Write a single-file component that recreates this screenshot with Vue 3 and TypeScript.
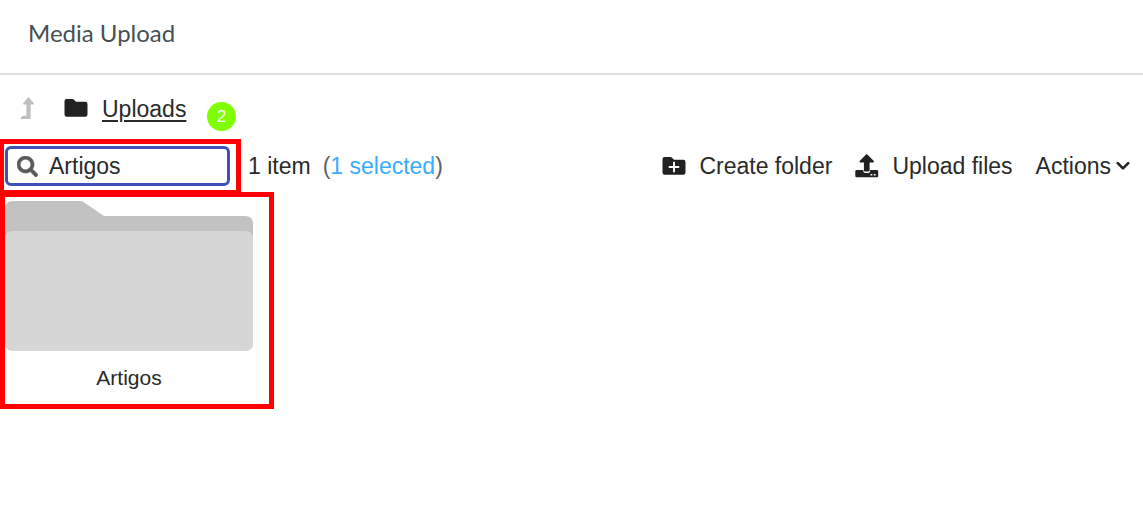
<script setup lang="ts">
import { ref } from 'vue'

const query = ref('Artigos')
const folders = ref<string[]>(['Artigos'])
</script>

<template>
  <main class="page">
    <header class="header">
      <h1>Media Upload</h1>
    </header>

    <nav class="crumbs" aria-label="Folders">
      <button class="up" type="button" aria-label="Up one level">
        <svg width="16" height="24" viewBox="0 0 16 24" aria-hidden="true">
          <path d="M8.5 1 L14 7.5 Q14.2 8.5 13 8.5 H10.6 V22 Q10.6 23 9.6 23 H1 Q0 23 .7 22 L2.2 20.2 Q2.6 19.8 3.2 19.8 H6.4 V8.5 H4 Q2.8 8.5 3 7.5 Z" fill="#bfbfbf" />
        </svg>
      </button>
      <svg class="crumb-icon" width="24" height="18" viewBox="0 0 24 18" aria-hidden="true">
        <path d="M2.5 0 H8.5 Q9.2 0 9.7.5 L12 2.8 H21.3 Q23.5 2.8 23.5 5 V15.5 Q23.5 17.7 21.3 17.7 H2.7 Q.5 17.7 .5 15.5 V2.2 Q.5 0 2.5 0 Z" fill="#212121" />
      </svg>
      <a class="crumb" href="#uploads">Uploads</a>
      <span class="step">2</span>
    </nav>

    <section class="toolbar">
      <div class="mark mark-search">
        <label class="search">
          <svg width="21" height="21" viewBox="0 0 512 512" aria-hidden="true">
            <path fill="#5a5a5a" stroke="#5a5a5a" stroke-width="14" d="M505 442.700 405.300 343c-4.500-4.500-10.600-7-17-7H372c27.600-35.300 44-79.700 44-128C416 93.100 322.900 0 208 0S0 93.100 0 208s93.100 208 208 208c48.300 0 92.700-16.400 128-44v16.300c0 6.400 2.500 12.500 7 17l99.700 99.700c9.400 9.400 24.600 9.400 33.900 0l28.300-28.300c9.400-9.400 9.400-24.600.1-34zM208 336c-70.700 0-128-57.200-128-128 0-70.700 57.200-128 128-128 70.700 0 128 57.200 128 128 0 70.700-57.200 128-128 128z" />
          </svg>
          <input v-model="query" type="text" aria-label="Search" />
        </label>
      </div>
      <p class="count">
        <span>{{ folders.length }} item</span>
        <span class="selected">(<a href="#selected">1 selected</a>)</span>
      </p>
      <div class="actions">
        <button type="button">
          <svg width="24" height="18" viewBox="0 0 24 18" aria-hidden="true">
            <path d="M2.500 0 H8.500 Q9.200 0 9.700.5 L12 2.800 H21.300 Q23.500 2.800 23.500 5 V15.500 Q23.500 17.700 21.300 17.700 H2.700 Q.5 17.700 .5 15.500 V2.200 Q.5 0 2.500 0 Z" fill="#212121" />
            <path d="M12 5.500 V14.500 M7.500 10 H16.500" stroke="#fff" stroke-width="1.900" stroke-linecap="round" />
          </svg>
          Create folder
        </button>
        <button type="button">
          <svg width="24" height="24" viewBox="0 0 24 24" aria-hidden="true">
            <path d="M1.500 16 H8.300 V17 Q8.300 19 10.300 19 H13.200 Q15.200 19 15.200 17 V16 H22 Q23.200 16 23.200 17.200 V22 Q23.200 23.200 22 23.200 H1.500 Q.3 23.200 .3 22 V17.200 Q.3 16 1.500 16 Z" fill="#212121" />
            <path d="M11 .6 Q11.700 0 12.400.6 L18.800 7 Q19.500 8.500 18 8.500 H14.600 V16.400 Q14.600 17.400 13.600 17.400 H9.900 Q8.900 17.400 8.900 16.400 V8.500 H5.400 Q4 8.500 4.700 7 Z" fill="#212121" />
            <path d="M15.500 20 H17.300 V21.500 H15.500 Z M18.800 20 H20.600 V21.500 H18.800 Z" fill="#fff" />
          </svg>
          Upload files
        </button>
        <button class="menu" type="button" aria-haspopup="menu">
          Actions
          <svg width="14" height="10" viewBox="0 0 14 10" aria-hidden="true">
            <path d="M1.800 2.200 L7 7.400 L12.200 2.200" fill="none" stroke="#212121" stroke-width="2.600" stroke-linecap="round" stroke-linejoin="round" />
          </svg>
        </button>
      </div>
    </section>

    <section class="mark mark-grid">
      <figure v-for="name in folders" :key="name" class="folder">
        <svg width="248" height="150" viewBox="0 0 248 150" aria-hidden="true">
          <path d="M8 0 H77 L99 15 H240 Q248 15 248 23 V60 H0 V8 Q0 0 8 0 Z" fill="#c2c2c2" />
          <rect y="30" width="248" height="120" rx="7" fill="#d6d6d6" />
        </svg>
        <figcaption>{{ name }}</figcaption>
      </figure>
    </section>
  </main>
</template>

<style>
body {
  margin: 0;
  background: #fff;
}
</style>

<style scoped>
.page {
  color: #2a2a2a;
  font-family: "Liberation Sans", Arial, sans-serif;
  font-size: 23px;
  line-height: 28px;
}

.header {
  padding: 17px 28px 24px;
  border-bottom: 2px solid #e0e0e0;
}

h1 {
  margin: 0;
  color: #455056;
  font: 400 24px/32px Lato, sans-serif;
}

button {
  display: flex;
  align-items: center;
  padding: 0;
  border: 0;
  background: none;
  color: inherit;
  font: inherit;
}

.crumbs {
  position: relative;
  display: flex;
  align-items: center;
  height: 64px;
  padding: 2px 20px 0;
  box-sizing: border-box;
}

.crumb-icon {
  margin: 0 14px 0 28px;
}

.crumb {
  padding-top: 2px;
  color: inherit;
  text-decoration-thickness: 2px;
  text-underline-offset: 3px;
}

.step {
  position: absolute;
  top: 27px;
  left: 207px;
  width: 29px;
  height: 29px;
  border-radius: 50%;
  background: #80ff00;
  color: #fff;
  font-size: 17px;
  line-height: 29px;
  text-align: center;
}

.toolbar {
  display: flex;
  align-items: center;
  padding-right: 13px;
}

.mark {
  box-sizing: border-box;
  border: 5px solid #f00;
}

.mark-search {
  width: 241px;
  padding: 2px 6px 4px 1px;
  border-left-width: 4px;
}

.search {
  display: flex;
  align-items: center;
  gap: 11px;
  height: 40px;
  padding: 0 9px;
  box-sizing: border-box;
  border: 3px solid #3f51b5;
  border-radius: 6px;
}

.search svg {
  flex: none;
}

.search input {
  flex: 1;
  min-width: 0;
  padding: 0;
  border: 0;
  outline: 0;
  background: none;
  color: inherit;
  font: inherit;
}

.count {
  display: flex;
  gap: 12px;
  margin: 0 0 0 7px;
  padding-bottom: 2px;
}

.selected {
  color: #616161;
}

.selected a {
  color: #38adff;
  text-decoration: none;
}

.actions {
  display: flex;
  gap: 23px;
  margin-left: auto;
  padding-bottom: 2px;
}

.actions button {
  gap: 13px;
}

.actions .menu {
  gap: 5px;
}

.mark-grid {
  width: 274px;
  margin-top: -3px;
  padding: 4px 0 12px;
}

.folder {
  width: 248px;
  margin: 0;
}

.folder svg {
  display: block;
}

figcaption {
  padding-top: 13px;
  font-size: 21px;
  line-height: 28px;
  text-align: center;
}
</style>
